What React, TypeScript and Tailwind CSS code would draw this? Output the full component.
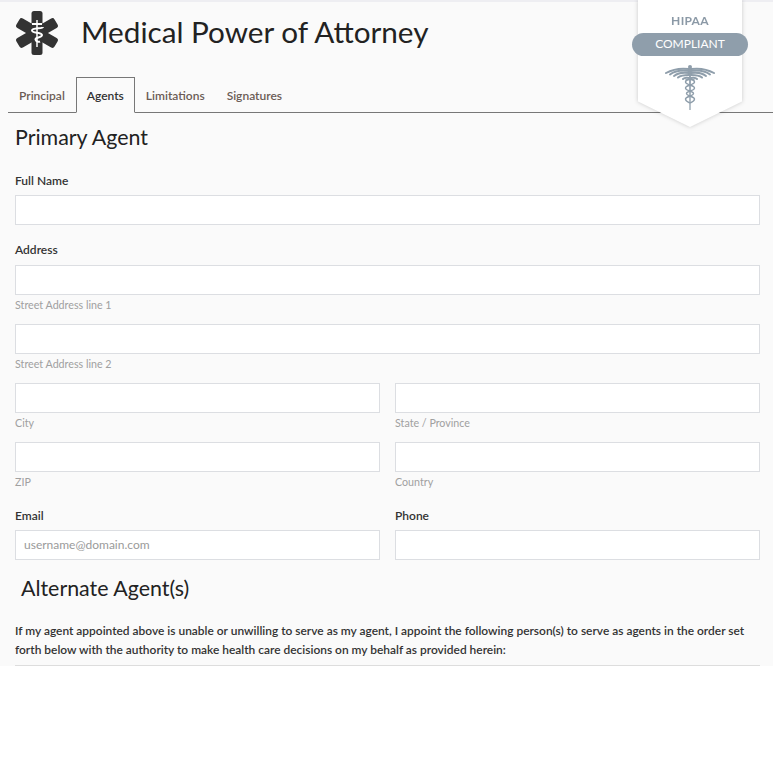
import React from "react";

const font = "font-['Lato','Noto_Sans',sans-serif]";

const StarOfLife = () => (
    <svg width="44" height="44" viewBox="0 0 44 44" className="shrink-0">
        <g fill="#333333">
            <rect x="16.500" y="0" width="11" height="44" rx="2.500"/>
            <rect x="16.500" y="0" width="11" height="44" rx="2.500" transform="rotate(60 22 22)"/>
            <rect x="16.500" y="0" width="11" height="44" rx="2.500" transform="rotate(-60 22 22)"/>
        </g>
        <path d="M22 9V36" stroke="#fff" strokeWidth="1.500"/>
        <path d="M17 13h10M28 16c0 2-11 .5-11 3.500s10 1.500 10 4.500-7 2-6.500 4.500 3.500 2.500 4.500 2" stroke="#fff" strokeWidth="2" fill="none"/>
    </svg>
);

const Caduceus = () => (
    <svg width="50" height="46" viewBox="0 0 50 46">
        <g fill="none" stroke="#8f9eab" strokeWidth="2" strokeLinecap="round">
            <path d="M24 4C16 3 8 4 1 8"/>
            <path d="M24 6C17 5 10 6 5 9.500"/>
            <path d="M24 8C18 7 13 8 9 11"/>
            <path d="M24 10C20 10 16 10 13 12.500"/>
            <path d="M24 13C21 12.500 19 13 18 14"/>
            <path d="M26 4C34 3 42 4 49 8"/>
            <path d="M26 6C33 5 40 6 45 9.500"/>
            <path d="M26 8C32 7 37 8 41 11"/>
            <path d="M26 10C30 10 34 10 37 12.500"/>
            <path d="M26 13C29 12.500 31 13 32 14"/>
        </g>
        <g fill="#8f9eab">
            <path d="M24 2h2l-.4 43h-1.200z"/>
            <circle cx="25" cy="2" r="2"/>
        </g>
        <path d="M20.500 15c2.500-1 9-1 9 2s-9 3-9 6 8 3 8 5.500-8 3-8 5.500 4 3.500 4.500 4M29.500 15c-2.500-1-9-1-9 2s9 3 9 6-8 3-8 5.500 8 3 8 5.500-4 3.500-4.500 4" fill="none" stroke="#8f9eab" strokeWidth="1.400"/>
    </svg>
);

const Field = ({placeholder}: { placeholder?: string }) => (
    <div className="h-[30px] w-full border border-[#dcdee2] bg-white px-2 flex items-center text-[12px] text-[#9a9a9a]">
        {placeholder}
    </div>
);

const Hint = ({children}: { children: React.ReactNode }) => (
    <p className="mt-[4px] h-[12px] text-[10.700px] leading-[12px] text-[#a0a0a0]">{children}</p>
);

const Label = ({children}: { children: React.ReactNode }) => (
    <p className="h-[14px] text-[12px] leading-[14px] font-semibold text-[#333333]">{children}</p>
);

const App = () => {
    return (
        <div className={`h-[783px] w-full bg-white overflow-hidden relative ${font}`}>
            <div className="h-[666px] bg-[#fafafa] border-t-2 border-[#eeeef2] overflow-hidden">
                <div className="h-[111px] flex flex-col">
                    <div className="flex items-center pl-[15px] h-[62px]">
                        <StarOfLife/>
                        <h1 className="ml-[22px] mb-[2px] text-[29.700px] leading-none text-[#222222]">Medical Power of Attorney</h1>
                    </div>
                    <div className="mt-[14px] ml-[8px] flex items-center h-[35px] border-b border-[#777777] text-[12px] font-semibold">
                        <span className="px-[11px] pt-[2px] text-[#6b5c55]">Principal</span>
                        <span className="w-[59px] h-[36px] -mt-px -mb-px pt-[2px] flex items-center justify-center border border-b-[#fafafa] border-[#777777] bg-[#fafafa] text-[#333333]">Agents</span>
                        <span className="px-[11px] pt-[2px] text-[#6b5c55]">Limitations</span>
                        <span className="px-[11px] pt-[2px] text-[#6b5c55]">Signatures</span>
                    </div>
                </div>

                <div className="px-[15px] pr-[13px]">
                    <h2 className="mt-[11px] h-[26px] text-[21.400px] leading-[26px] text-[#222222]">Primary Agent</h2>

                    <div className="mt-[24px]"><Label>Full Name</Label></div>
                    <div className="mt-[7px]"><Field/></div>

                    <div className="mt-[18px]"><Label>Address</Label></div>
                    <div className="mt-[8px]"><Field/></div>
                    <Hint>Street Address line 1</Hint>
                    <div className="mt-[13px]"><Field/></div>
                    <Hint>Street Address line 2</Hint>

                    <div className="mt-[13px] grid grid-cols-2 gap-x-[15px]">
                        <div><Field/><Hint>City</Hint></div>
                        <div><Field/><Hint>State / Province</Hint></div>
                    </div>
                    <div className="mt-[13px] grid grid-cols-2 gap-x-[15px]">
                        <div><Field/><Hint>ZIP</Hint></div>
                        <div><Field/><Hint>Country</Hint></div>
                    </div>

                    <div className="mt-[21px] grid grid-cols-2 gap-x-[15px]">
                        <div>
                            <Label>Email</Label>
                            <div className="mt-[7px]"><Field placeholder="username@domain.com"/></div>
                        </div>
                        <div>
                            <Label>Phone</Label>
                            <div className="mt-[7px]"><Field/></div>
                        </div>
                    </div>

                    <h2 className="mt-[15px] ml-[6px] h-[26px] text-[21.400px] leading-[26px] text-[#222222]">Alternate Agent(s)</h2>

                    <p className="mt-[20px] text-[11.950px] leading-[19px] font-semibold text-[#333333]">
                        If my agent appointed above is unable or unwilling to serve as my agent, I appoint the following person(s) to serve as agents in the order set forth below with the authority to make health care decisions on my behalf as provided herein:
                    </p>
                    <div className="mt-[6px] border-t border-[#dddddd]"/>
                </div>
            </div>

            <div className="absolute top-0 left-[632px] w-[116px] flex flex-col items-center">
                <div className="drop-shadow-[0_0_2px_rgba(0,0,0,0.2)]">
                    <div className="w-[104px] h-[127px] bg-white [clip-path:polygon(0_0,100%_0,100%_80%,50%_100%,0_80%)] flex flex-col items-center">
                        <p className="mt-[14px] text-[12px] leading-[14px] font-bold tracking-wide text-[#8b99a6]">HIPAA</p>
                        <div className="h-[37px]"/>
                        <Caduceus/>
                    </div>
                </div>
                <div className="absolute top-[33px] left-0 w-[116px] h-[23px] pb-[2px] rounded-full bg-[#8f9eab] text-white text-[12px] flex items-center justify-center">COMPLIANT</div>
            </div>
        </div>
    );
}

export default App;
